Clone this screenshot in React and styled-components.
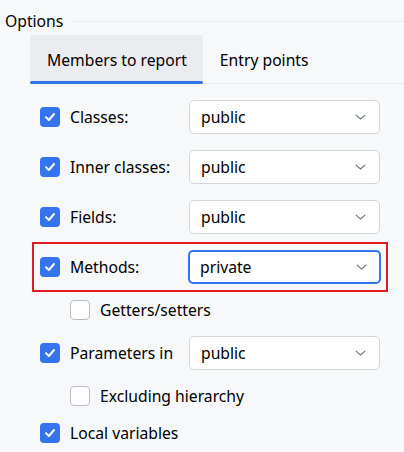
import { createGlobalStyle } from 'styled-components';
import styled from 'styled-components';

const GlobalStyle = createGlobalStyle`
  body {
    margin: 0;
    background: #f7f8fa;
    font-family: "Noto Sans", "DejaVu Sans", sans-serif;
    font-size: 15.7px;
    color: #000;
  }
`;

const Page = styled.div`
  width: 404px;
  height: 452px;
  overflow: hidden;
  padding-top: 11px;
  box-sizing: border-box;
`;

const GroupTitle = styled.div`
  display: flex;
  align-items: center;
  padding-left: 5px;
  height: 20px;
  &::after {
    content: '';
    flex: 1;
    height: 1px;
    margin-left: 9px;
    background: #ebecf0;
  }
`;

const TabBar = styled.div`
  display: flex;
  margin: 4px 0 0 30px;
  height: 49px;
  border-bottom: 1px solid #ebecf0;
  box-sizing: border-box;
`;

const Tab = styled.div`
  position: relative;
  display: flex;
  align-items: center;
  padding: 0 16px 0 17px;
  margin-bottom: -1px;
  background: ${p => (p.$active ? '#ebecf0' : 'transparent')};
  &::after {
    content: '';
    display: ${p => (p.$active ? 'block' : 'none')};
    position: absolute;
    left: 0;
    right: 0;
    bottom: 0;
    height: 3px;
    border-radius: 2px;
    background: #3574f0;
  }
`;

const Rows = styled.div`
  padding: 8px 16px 0 32px;
`;

const Row = styled.div`
  display: flex;
  align-items: center;
  height: ${p => p.$h}px;
  padding: 0 6px 0 ${p => (p.$sub ? 36 : 6)}px;
  border: 2px solid ${p => (p.$highlight ? '#e01b24' : 'transparent')};
  box-sizing: border-box;
`;

const Box = styled.span`
  flex: none;
  width: 20px;
  height: 20px;
  border-radius: 4px;
  box-sizing: border-box;
  display: flex;
  align-items: center;
  justify-content: center;
  background: ${p => (p.$checked ? '#3574f0' : '#fff')};
  border: ${p => (p.$checked ? 'none' : '1px solid #b8bcc6')};
`;

const Label = styled.span`
  margin-left: 10px;
  width: ${p => (p.$fixed ? '119px' : 'auto')};
  flex: none;
  white-space: nowrap;
`;

const Select = styled.div`
  flex: 1;
  height: 34px;
  display: flex;
  align-items: center;
  justify-content: space-between;
  box-sizing: border-box;
  background: #fff;
  border-radius: 5px;
  border: ${p => (p.$focused ? '2px solid #3574f0' : '1px solid #d3d5db')};
  padding: 0 ${p => (p.$focused ? 12 : 13)}px 0 ${p => (p.$focused ? 10 : 11)}px;
  margin-left: ${p => (p.$focused ? '-1px' : '0')};
  margin-right: ${p => (p.$focused ? '-1px' : '0')};
`;

function Check({ checked }) {
  return (
    <Box $checked={checked}>
      {checked && (
        <svg width="14" height="14" viewBox="0 0 14 14">
          <path d="M3 7.3 L5.9 10 L11 4" fill="none" stroke="#fff" strokeWidth="2" strokeLinecap="round" strokeLinejoin="round" />
        </svg>
      )}
    </Box>
  );
}

function Chevron() {
  return (
    <svg width="11" height="6" viewBox="0 0 11 6">
      <path d="M0.8 0.8 L5.5 5 L10.2 0.8" fill="none" stroke="#6c707e" strokeWidth="1.1" />
    </svg>
  );
}

function SelectRow({ label, value, highlight }) {
  return (
    <Row $h={50} $highlight={highlight}>
      <Check checked />
      <Label $fixed>{label}</Label>
      <Select $focused={highlight}>
        <span>{value}</span>
        <Chevron />
      </Select>
    </Row>
  );
}

function CheckRow({ label, checked, sub, h }) {
  return (
    <Row $h={h} $sub={sub}>
      <Check checked={checked} />
      <Label>{label}</Label>
    </Row>
  );
}

export default function App() {
  return (
    <Page>
      <GlobalStyle />
      <GroupTitle>Options</GroupTitle>
      <TabBar>
        <Tab $active>Members to report</Tab>
        <Tab>Entry points</Tab>
      </TabBar>
      <Rows>
        <SelectRow label="Classes:" value="public" />
        <SelectRow label="Inner classes:" value="public" />
        <SelectRow label="Fields:" value="public" />
        <SelectRow label="Methods:" value="private" highlight />
        <CheckRow label="Getters/setters" sub h={36} />
        <SelectRow label="Parameters in" value="public" />
        <CheckRow label="Excluding hierarchy" sub h={36} />
        <CheckRow label="Local variables" checked h={38} />
      </Rows>
    </Page>
  );
}
